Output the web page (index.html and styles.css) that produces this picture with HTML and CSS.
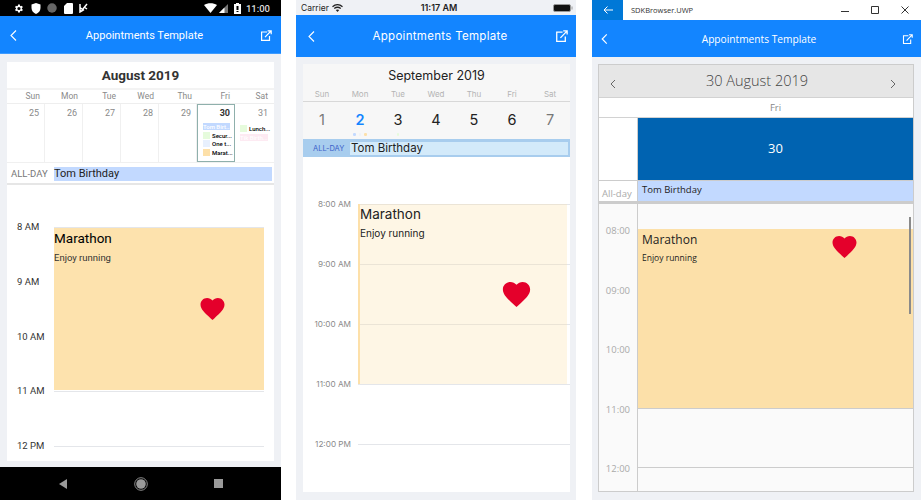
FILE: index.html
```html
<!DOCTYPE html>
<html lang="en">

<head>
    <meta charset="UTF-8">
    <title>Appointments Template</title>
    <link rel="stylesheet" href="styles.css">
</head>

<body>
    <div class="screens">

        <!-- android -->
        <div class="phone droid">
            <div class="droidstatus">
                <div class="droidstatusleft">
                    <svg width="11" height="11" viewBox="0 0 24 24"><path fill="#fff" d="M19.4 13a7.5 7.5 0 0 0 0-2l2.1-1.600-2-3.500-2.500 1a7.500 7.500 0 0 0-1.700-1L15 3.300h-4L10.600 6a7.500 7.500 0 0 0-1.700 1l-2.500-1-2 3.500L6.500 11a7.500 7.500 0 0 0 0 2l-2.100 1.600 2 3.500 2.500-1a7.500 7.500 0 0 0 1.700 1l.4 2.600h4l.4-2.600a7.500 7.500 0 0 0 1.700-1l2.500 1 2-3.500zM13 15.500a3.500 3.500 0 1 1 0-7 3.500 3.500 0 0 1 0 7z"/></svg>
                    <svg width="10" height="11" viewBox="0 0 20 22"><path fill="#fff" d="M10 0l9 3v7c0 6-4 10-9 12C5 20 1 16 1 10V3z"/></svg>
                    <svg width="10" height="10" viewBox="0 0 20 20"><circle cx="10" cy="10" r="9.500" fill="#666"/></svg>
                    <svg width="9" height="11" viewBox="0 0 18 22"><path fill="#fff" d="M6 0h10a2 2 0 0 1 2 2v18a2 2 0 0 1-2 2H2a2 2 0 0 1-2-2V6z"/></svg>
                    <svg width="9" height="10" viewBox="0 0 18 20"><path fill="none" stroke="#fff" stroke-width="3" d="M2 2v16l8-5M2 9l5 4 9-11M10 8l6 4"/></svg>
                </div>
                <div class="droidstatusright">
                    <svg width="13" height="10" viewBox="0 0 26 20"><path fill="#fff" d="M0 4c7-5 19-5 26 0L13 20z"/></svg>
                    <svg width="9" height="9" viewBox="0 0 18 18"><path fill="#777" d="M18 0v18H0z"/><path fill="#fff" d="M11 7v11H0z"/></svg>
                    <svg class="droidbattery" width="7" height="11" viewBox="0 0 14 22"><path fill="#fff" d="M4 0h6v2h4v20H0V2h4z"/><path fill="#000" d="M5 6h4v8H5zM5 16h4v2H5z"/></svg>
                    <span class="droidclock">11:00</span>
                </div>
            </div>
            <div class="topbar">
                <svg class="backicon" width="7" height="11" viewBox="0 0 7 11"><path fill="none" stroke="#fff" stroke-width="1.100" d="M6 .5L1 5.500l5 5"/></svg>
                <span class="topbartitle">Appointments Template</span>
                <svg class="openicon" width="12" height="11" viewBox="0 0 12 11"><path fill="none" stroke="#fff" stroke-width="1.200" d="M7 2H1.600v8.400H9.500V6M5 7.200L11 1M7.600.8h3.600v3.400"/></svg>
            </div>
            <div class="droidbody">
                <div class="droidcard">
                    <div class="droidmonth">August 2019</div>
                    <div class="droidweek">
                        <span>Sun</span><span>Mon</span><span>Tue</span><span>Wed</span><span>Thu</span><span>Fri</span><span>Sat</span>
                    </div>
                    <div class="droiddays">
                        <div class="droidday">25</div>
                        <div class="droidday">26</div>
                        <div class="droidday">27</div>
                        <div class="droidday">28</div>
                        <div class="droidday">29</div>
                        <div class="droidday droidselected">
                            <b>30</b>
                            <div class="chip chipfull">Tom Birt...</div>
                            <div class="chip"><i class="green"></i>Secur...</div>
                            <div class="chip"><i class="pale"></i>One t...</div>
                            <div class="chip"><i class="orange"></i>Marat...</div>
                        </div>
                        <div class="droidday droidlast">
                            31
                            <div class="chip"><i class="green"></i>Lunch...</div>
                            <div class="chip chippink">Tik Birth...</div>
                        </div>
                    </div>
                    <div class="droidallday">
                        <span class="droidalldaylabel">ALL-DAY</span>
                        <span class="droidalldaybar">Tom Birthday</span>
                    </div>
                    <div class="hours droidhours">
                        <div class="hour"><span class="hourlabel">8 AM</span><div class="slot"></div></div>
                        <div class="hour"><span class="hourlabel">9 AM</span><div class="slot noline"></div></div>
                        <div class="hour"><span class="hourlabel">10 AM</span><div class="slot noline"></div></div>
                        <div class="hour"><span class="hourlabel">11 AM</span><div class="slot"></div></div>
                        <div class="hour"><span class="hourlabel">12 PM</span><div class="slot"></div></div>
                        <div class="event">
                            <div class="eventtitle">Marathon</div>
                            <div class="eventnote">Enjoy running</div>
                            <svg class="heart" viewBox="2 3 20 18.350"><path fill="#e4002b" d="M12 21.350l-1.450-1.320C5.400 15.360 2 12.280 2 8.500 2 5.420 4.420 3 7.500 3c1.740 0 3.410.81 4.500 2.090C13.090 3.810 14.760 3 16.500 3 19.580 3 22 5.420 22 8.500c0 3.780-3.400 6.860-8.550 11.540z"/></svg>
                        </div>
                    </div>
                </div>
            </div>
            <div class="droidnav">
                <svg width="10" height="10" viewBox="0 0 10 10"><path fill="#9a9a9a" d="M9 0v10L1 5z"/></svg>
                <svg width="14" height="14" viewBox="0 0 14 14"><circle cx="7" cy="7" r="6.300" fill="none" stroke="#9a9a9a" stroke-width=".9"/><circle cx="7" cy="7" r="4.800" fill="#9a9a9a"/></svg>
                <svg width="9" height="9" viewBox="0 0 9 9"><path fill="#9a9a9a" d="M0 0h9v9H0z"/></svg>
            </div>
        </div>

        <!-- ios -->
        <div class="phone ios">
            <div class="iosstatus">
                <span class="ioscarrier">Carrier
                    <svg width="11" height="8" viewBox="0 0 22 16"><path fill="none" stroke="#222" stroke-width="2.600" d="M1 5.500c6-5 14-5 20 0M4.500 9c4-3 9-3 13 0"/><path fill="#222" d="M7.500 12c2-1.600 5-1.600 7 0L11 16z"/></svg>
                </span>
                <span class="iosclock">11:17 AM</span>
                <svg class="iosbattery" width="20" height="8" viewBox="0 0 20 8"><rect x=".5" y=".5" width="17" height="7" rx="1.500" fill="#111" stroke="#999"/><path fill="#999" d="M18.500 2.500h1v3h-1z"/></svg>
            </div>
            <div class="topbar">
                <svg class="backicon" width="7" height="11" viewBox="0 0 7 11"><path fill="none" stroke="#fff" stroke-width="1.100" d="M6 .5L1 5.500l5 5"/></svg>
                <span class="topbartitle">Appointments Template</span>
                <svg class="openicon" width="13" height="12" viewBox="0 0 12 11"><path fill="none" stroke="#fff" stroke-width="1.200" d="M7 2H1.600v8.400H9.500V6M5 7.200L11 1M7.600.8h3.600v3.400"/></svg>
            </div>
            <div class="iosbody">
                <div class="ioscard">
                    <div class="iostop">
                        <div class="iosmonth">September 2019</div>
                        <div class="iosweek">
                            <span>Sun</span><span>Mon</span><span>Tue</span><span>Wed</span><span>Thu</span><span>Fri</span><span>Sat</span>
                        </div>
                        <div class="iosdates">
                            <div class="iosdate iosdim">1</div>
                            <div class="iosdate iostoday">2<div class="iosdots"><i class="dotblue"></i><i class="dotpale"></i><i class="dotorange"></i></div></div>
                            <div class="iosdate">3<div class="iosdots"><i class="dotgreen"></i></div></div>
                            <div class="iosdate">4</div>
                            <div class="iosdate">5</div>
                            <div class="iosdate">6</div>
                            <div class="iosdate iosdim">7</div>
                        </div>
                    </div>
                    <div class="iosallday">
                        <span class="iosalldaylabel">ALL-DAY</span>
                        <span class="iosalldaybar">Tom Birthday</span>
                    </div>
                    <div class="hours ioshours">
                        <div class="hour"><span class="hourlabel">8:00 AM</span><div class="slot"></div></div>
                        <div class="hour"><span class="hourlabel">9:00 AM</span><div class="slot"></div></div>
                        <div class="hour"><span class="hourlabel">10:00 AM</span><div class="slot"></div></div>
                        <div class="hour"><span class="hourlabel">11:00 AM</span><div class="slot"></div></div>
                        <div class="hour"><span class="hourlabel">12:00 PM</span><div class="slot"></div></div>
                        <div class="event">
                            <div class="eventtitle">Marathon</div>
                            <div class="eventnote">Enjoy running</div>
                            <svg class="heart" viewBox="2 3 20 18.350"><path fill="#e4002b" d="M12 21.350l-1.450-1.320C5.400 15.360 2 12.280 2 8.500 2 5.420 4.420 3 7.500 3c1.740 0 3.410.81 4.500 2.090C13.090 3.810 14.760 3 16.500 3 19.580 3 22 5.420 22 8.500c0 3.780-3.400 6.860-8.550 11.540z"/></svg>
                        </div>
                    </div>
                </div>
            </div>
        </div>

        <!-- uwp -->
        <div class="phone uwp">
            <div class="uwpwindow">
                <div class="uwpback">
                    <svg width="10" height="8" viewBox="0 0 10 8"><path fill="none" stroke="#fff" d="M10 4H1M4.500.5L1 4l3.500 3.500"/></svg>
                </div>
                <span class="uwpname">SDKBrowser.UWP</span>
                <div class="uwpcontrols">
                    <svg width="8" height="8" viewBox="0 0 8 8"><path stroke="#333" d="M0 5.500h8"/></svg>
                    <svg width="8" height="8" viewBox="0 0 8 8"><path fill="none" stroke="#333" d="M.5.500h7v7h-7z"/></svg>
                    <svg width="8" height="8" viewBox="0 0 8 8"><path stroke="#333" d="M.5.500l7 7M7.500.5l-7 7"/></svg>
                </div>
            </div>
            <div class="topbar">
                <svg class="backicon" width="7" height="10" viewBox="0 0 7 11"><path fill="none" stroke="#fff" stroke-width="1.300" d="M6 .5L1 5.500l5 5"/></svg>
                <span class="topbartitle">Appointments Template</span>
                <svg class="openicon" width="11" height="10" viewBox="0 0 12 11"><path fill="none" stroke="#fff" stroke-width="1.200" d="M7 2H1.600v8.400H9.500V6M5 7.200L11 1M7.600.8h3.600v3.400"/></svg>
            </div>
            <div class="uwpbody">
                <div class="uwpcard">
                    <div class="uwpnav">
                        <svg width="6" height="10" viewBox="0 0 6 10"><path fill="none" stroke="#666" d="M5 1L1 5l4 4"/></svg>
                        <span class="uwpdate">30 August 2019</span>
                        <svg width="6" height="10" viewBox="0 0 6 10"><path fill="none" stroke="#666" d="M1 1l4 4-4 4"/></svg>
                    </div>
                    <div class="uwpdayname">Fri</div>
                    <div class="uwpdayrow">
                        <div class="uwpgutter"></div>
                        <div class="uwpdaynum">30</div>
                    </div>
                    <div class="uwpallday">
                        <div class="uwpalldaylabel">All-day</div>
                        <div class="uwpalldaybar">Tom Birthday</div>
                    </div>
                    <div class="hours uwphours">
                        <div class="hour"><span class="hourlabel">08:00</span><div class="slot"></div></div>
                        <div class="hour"><span class="hourlabel">09:00</span><div class="slot"></div></div>
                        <div class="hour"><span class="hourlabel">10:00</span><div class="slot"></div></div>
                        <div class="hour"><span class="hourlabel">11:00</span><div class="slot"></div></div>
                        <div class="hour"><span class="hourlabel">12:00</span><div class="slot"></div></div>
                        <div class="event">
                            <div class="eventtitle">Marathon</div>
                            <div class="eventnote">Enjoy running</div>
                            <svg class="heart" viewBox="2 3 20 18.350"><path fill="#e4002b" d="M12 21.350l-1.450-1.320C5.400 15.360 2 12.280 2 8.500 2 5.420 4.420 3 7.500 3c1.740 0 3.410.81 4.500 2.090C13.090 3.810 14.760 3 16.500 3 19.580 3 22 5.420 22 8.500c0 3.780-3.400 6.860-8.550 11.540z"/></svg>
                        </div>
                        <div class="uwpscroll"></div>
                    </div>
                </div>
            </div>
        </div>

    </div>
</body>

</html>
```

FILE: styles.css
```css
* {
    margin: 0;
    padding: 0;
    box-sizing: border-box;
}

body {
    width: 921px;
    height: 500px;
    overflow: hidden;
    background-color: #fff;
    font-family: "Roboto", sans-serif;
}

.screens {
    display: flex;
    height: 500px;
}

.phone {
    display: flex;
    flex-direction: column;
    height: 500px;
    background-color: #eff1f5;
}

.droid {
    width: 281px;
}

.ios {
    width: 280px;
    margin-left: 15px;
}

.uwp {
    width: 329px;
    margin-left: 16px;
}

/* header bar, same on all three */
.topbar {
    display: flex;
    align-items: center;
    justify-content: space-between;
    flex-shrink: 0;
    background-color: #1385ff;
    color: #fff;
}

.droid .topbar {
    height: 38px;
    padding: 2px 9px 0 10px;
    border-bottom: 1px solid #3d9bff;
    font-size: 11px;
}

.droid .topbartitle {
    margin-left: 12px;
}

.ios .topbar {
    height: 42px;
    padding: 0 8px 0 12px;
    font-family: "Inter", sans-serif;
    font-size: 11.500px;
    letter-spacing: .3px;
}

.ios .topbartitle {
    margin-left: 10px;
}

.uwp .topbar {
    height: 37px;
    padding: 0 8px 0 9px;
    font-family: "Open Sans", sans-serif;
    font-size: 10.200px;
}

.uwp .topbartitle {
    margin: 1px 0 0 8px;
}

/* time grid */
.hours {
    position: relative;
    flex: 1;
    display: flex;
    flex-direction: column;
    overflow: hidden;
}

.hour {
    display: flex;
    flex-shrink: 0;
}

.slot {
    flex: 1;
    border-top: 1px solid #e4e6ea;
}

.noline {
    border-top: none;
}

.event {
    position: absolute;
}

.heart {
    position: absolute;
}

/* android */
.droidstatus {
    display: flex;
    justify-content: space-between;
    align-items: center;
    flex-shrink: 0;
    height: 16px;
    padding: 0 11px 0 13px;
    background-color: #000;
}

.droidstatusleft,
.droidstatusright {
    display: flex;
    align-items: center;
}

.droidstatusleft {
    gap: 6.500px;
}

.droidstatusright {
    gap: 2px;
}

.droidbattery {
    margin-left: 4px;
}

.droidclock {
    margin-left: 3px;
    color: #ddd;
    font-size: 9.500px;
    font-weight: 500;
}

.droidbody {
    flex: 1;
    padding: 8px 7px 6px;
}

.droidcard {
    display: flex;
    flex-direction: column;
    height: 399px;
    background-color: #fff;
}

.droidmonth {
    flex-shrink: 0;
    height: 26px;
    line-height: 26px;
    text-align: center;
    font-size: 13.500px;
    font-weight: 700;
    color: #333;
}

.droidweek {
    display: grid;
    grid-template-columns: repeat(7, 38px);
    flex-shrink: 0;
    height: 16px;
    padding-top: 1px;
    border-top: 2px solid #f3f3f3;
    border-bottom: 1px solid #eee;
    color: #8a8a8a;
    font-size: 8.500px;
    line-height: 11px;
}

.droidweek span {
    padding-right: 5px;
    text-align: right;
}

.droiddays {
    display: grid;
    grid-template-columns: repeat(7, 38px);
    flex-shrink: 0;
    height: 59px;
    border-bottom: 1px solid #f0f0f0;
}

.droidday {
    padding: 4px 5px 0 0;
    border-right: 1px solid #f0f0f0;
    color: #8a8a8a;
    font-size: 9px;
    text-align: right;
}

.droidlast {
    border-right: none;
}

.droidselected {
    border: 1px solid #8fb0ac;
    padding: 3px 4px 0 0;
}

.droidselected b {
    display: block;
    height: 15px;
    color: #333;
}

.droidlast .chip:first-of-type {
    margin-top: 7px;
}

.chip {
    display: flex;
    align-items: center;
    gap: 2px;
    height: 7px;
    margin: 0 0 1.500px 5px;
    color: #000;
    font-size: 6px;
    font-weight: 500;
    line-height: 7px;
    text-align: left;
    white-space: nowrap;
}

.chip i {
    flex-shrink: 0;
    width: 7px;
    height: 7px;
}

.chipfull {
    background-color: #c2d9ff;
    color: #fff;
}

.chippink {
    width: 28px;
    background-color: #fdeaf2;
    color: #fff;
}

.green {
    background-color: #e6fbdc;
}

.pale {
    background-color: #e8f0fd;
}

.orange {
    background-color: #fde0a9;
}

.droidallday {
    display: flex;
    align-items: center;
    flex-shrink: 0;
    height: 22px;
    padding: 1px 2px 0 4px;
    border-bottom: 2px solid #e6e6e6;
}

.droidalldaylabel {
    width: 43px;
    color: #777;
    font-size: 9.500px;
}

.droidalldaybar {
    flex: 1;
    height: 14px;
    background-color: #c2d9ff;
    color: #222;
    font-size: 11px;
    line-height: 14px;
}

.droidhours {
    padding-top: 42px;
}

.droidhours .hour {
    height: 54.750px;
}

.droidhours .slot {
    margin-right: 10px;
}

.droidhours .hourlabel {
    width: 47px;
    margin-top: -6px;
    padding-left: 10px;
    color: #333;
    font-size: 9.500px;
    line-height: 12px;
}

.droidhours .event {
    left: 47px;
    top: 43px;
    width: 210px;
    height: 162px;
    background-color: #fde2ad;
    color: #000;
}

.droidhours .eventtitle {
    margin-top: 2px;
    font-size: 13.500px;
    line-height: 16px;
}

.droidhours .eventnote {
    margin-top: 6px;
    font-size: 9.500px;
    line-height: 12px;
    color: #333;
}

.droidhours .heart {
    left: 145px;
    top: 70px;
    width: 27px;
    height: 22px;
}

.droidnav {
    display: flex;
    justify-content: space-between;
    align-items: center;
    flex-shrink: 0;
    height: 33px;
    padding: 0 58px;
    background-color: #000;
}

/* ios */
.iosstatus {
    display: flex;
    justify-content: space-between;
    align-items: center;
    flex-shrink: 0;
    height: 15px;
    padding: 0 3px 0 5px;
    font-family: "Inter", sans-serif;
    font-size: 8.500px;
    color: #222;
}

.ioscarrier {
    display: flex;
    align-items: center;
    gap: 3px;
    width: 100px;
}

.iosclock {
    font-size: 9px;
    font-weight: 600;
}

.iosbattery {
    margin-left: 76px;
}

.iosbody {
    flex: 1;
    padding: 7px 6px 8px 7px;
}

.ioscard {
    display: flex;
    flex-direction: column;
    height: 428px;
    background-color: #fff;
}

.iostop {
    flex-shrink: 0;
    height: 75px;
    background-color: #f7f7f7;
    font-family: "Inter", sans-serif;
}

.iosmonth {
    height: 25px;
    padding-top: 3px;
    text-align: center;
    font-size: 12.500px;
    line-height: 17px;
    color: #222;
}

.iosweek {
    display: grid;
    grid-template-columns: repeat(7, 38px);
    height: 13px;
    border-bottom: 1px solid #d8d8d8;
    color: #b4b4b4;
    font-size: 8px;
    line-height: 10px;
    text-align: center;
}

.iosdates {
    display: grid;
    grid-template-columns: repeat(7, 38px);
}

.iosdate {
    height: 36px;
    padding-top: 9px;
    text-align: center;
    color: #222;
    font-size: 14.500px;
    line-height: 18px;
}

.iosdim {
    color: #777;
}

.iostoday {
    color: #1385ff;
    font-weight: 600;
}

.iosdots {
    display: flex;
    justify-content: center;
    gap: 3px;
    height: 3px;
    margin-top: 4px;
}

.iosdots i {
    width: 2.500px;
    height: 2.500px;
    border-radius: 50%;
}

.dotblue {
    background-color: #c2d9ff;
}

.dotpale {
    background-color: #eef2f8;
}

.dotorange {
    background-color: #fde0a9;
}

.dotgreen {
    background-color: #e6fbdc;
}

.iosallday {
    display: flex;
    align-items: center;
    flex-shrink: 0;
    height: 18px;
    padding: 0 2px;
    background-color: #a8cdee;
}

.iosalldaylabel {
    width: 45px;
    padding-left: 8px;
    color: #3d62c9;
    font-family: "Inter", sans-serif;
    font-size: 7.500px;
    white-space: nowrap;
}

.iosalldaybar {
    flex: 1;
    height: 13px;
    padding-left: 1px;
    background-color: #d3eafa;
    color: #222;
    font-family: "Inter", sans-serif;
    font-size: 11.500px;
    line-height: 13px;
}

.ioshours {
    padding-top: 47px;
    font-family: "Inter", sans-serif;
}

.ioshours .hour {
    height: 60px;
}

.ioshours .hourlabel {
    width: 55px;
    margin-top: -5px;
    padding-right: 7px;
    color: #8a8a8a;
    font-size: 8.200px;
    line-height: 11px;
    text-align: right;
}

.ioshours .event {
    left: 55px;
    top: 47px;
    width: 209px;
    height: 180px;
    border-left: 2px solid #fde0a9;
    background-color: rgba(253, 224, 169, .3);
    color: #222;
}

.ioshours .eventtitle {
    margin-top: 2px;
    font-size: 13.500px;
    line-height: 16px;
}

.ioshours .eventnote {
    margin-top: 5px;
    font-size: 10px;
    line-height: 13px;
}

.ioshours .heart {
    left: 142px;
    top: 78px;
    width: 29px;
    height: 25px;
}

/* uwp */
.uwpwindow {
    display: flex;
    align-items: center;
    flex-shrink: 0;
    height: 20px;
    background-color: #fff;
    font-family: "Open Sans", sans-serif;
}

.uwpback {
    display: flex;
    align-items: center;
    justify-content: center;
    width: 31px;
    height: 20px;
    background-color: #0078d7;
}

.uwpname {
    margin-left: 8px;
    color: #333;
    font-size: 7.500px;
}

.uwpcontrols {
    display: flex;
    gap: 22px;
    margin-left: auto;
    padding-right: 12px;
}

.uwpbody {
    flex: 1;
    padding: 7px 7px 8px 6px;
}

.uwpcard {
    display: flex;
    flex-direction: column;
    height: 428px;
    border: 1px solid #ccc;
    background-color: #fff;
    font-family: "Open Sans", sans-serif;
}

.uwpnav {
    display: flex;
    align-items: center;
    justify-content: space-between;
    flex-shrink: 0;
    height: 33px;
    padding: 5px 17px 0 11px;
    border-bottom: 1px solid #d2d2d2;
    background-color: #e6e6e6;
}

.uwpdate {
    margin: 0 0 6px 8px;
    color: #444;
    font-size: 14.500px;
    font-weight: 300;
}

.uwpdayname {
    flex-shrink: 0;
    height: 20px;
    padding-left: 39px;
    border-bottom: 1px solid #d2d2d2;
    color: #888;
    font-size: 9.500px;
    line-height: 19px;
    text-align: center;
}

.uwpdayrow {
    display: flex;
    flex-shrink: 0;
    height: 62px;
}

.uwpgutter {
    width: 39px;
    border-right: 1px solid #ccc;
}

.uwpdaynum {
    flex: 1;
    background-color: #0063b1;
    color: #fff;
    font-size: 13px;
    line-height: 60px;
    text-align: center;
}

.uwpallday {
    display: flex;
    flex-shrink: 0;
    height: 24px;
    border-top: 1px solid #ccc;
    border-bottom: 3px solid #ccc;
}

.uwpalldaylabel {
    width: 39px;
    padding: 7px 0 0 3px;
    border-right: 1px solid #ccc;
    color: #aaa;
    font-size: 9.500px;
    line-height: 12px;
}

.uwpalldaybar {
    flex: 1;
    padding-left: 4px;
    background-color: #c2d9ff;
    color: #222;
    font-size: 9.500px;
    line-height: 17px;
}

.uwphours {
    padding-top: 25px;
    background-color: #fafafa;
}

.uwphours::before {
    content: "";
    position: absolute;
    left: 38px;
    top: 0;
    bottom: 0;
    width: 1px;
    background-color: #ccc;
}

.uwphours .hour {
    height: 59.500px;
}

.uwphours .slot {
    margin-left: 1px;
    border-top-color: #ccc;
}

.uwphours .hourlabel {
    width: 38px;
    margin-top: -5px;
    padding-right: 7px;
    color: #aaa;
    font-size: 9.500px;
    line-height: 13px;
    text-align: right;
}

.uwphours .event {
    left: 39px;
    top: 25px;
    width: 276px;
    height: 179px;
    padding-left: 4px;
    background-color: #fce0a9;
    color: #222;
}

.uwphours .eventtitle {
    margin-top: 3px;
    font-size: 12px;
    line-height: 16px;
}

.uwphours .eventnote {
    margin-top: 4px;
    font-size: 8.500px;
    line-height: 12px;
}

.uwphours .heart {
    left: 194px;
    top: 7px;
    width: 25px;
    height: 22px;
}

.uwpscroll {
    position: absolute;
    right: 2px;
    top: 13px;
    width: 2px;
    height: 97px;
    background-color: #8a8a8a;
}
```
